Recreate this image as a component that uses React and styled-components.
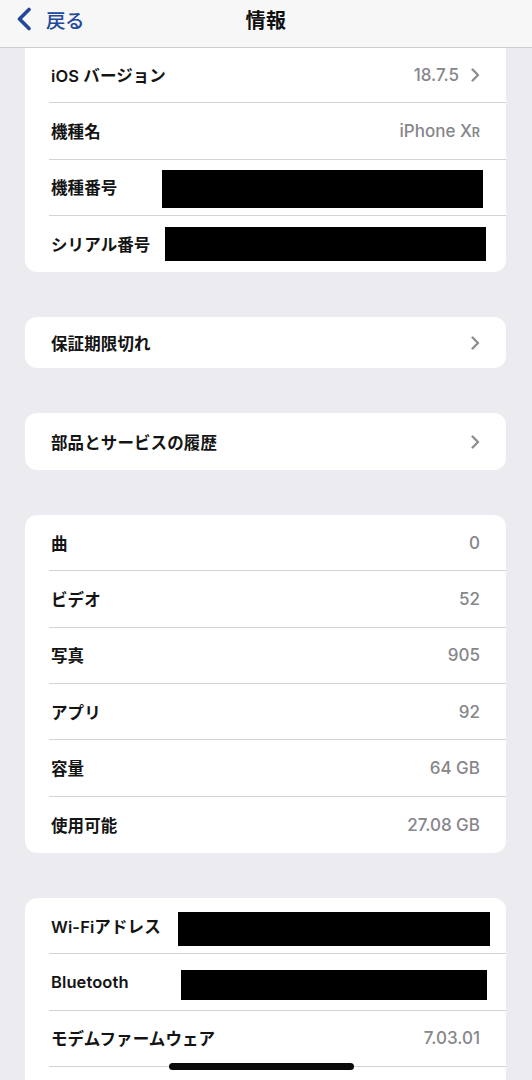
import React from "react";
import styled, { createGlobalStyle } from "styled-components";

const Global = createGlobalStyle`
  html, body { margin: 0; padding: 0; background: #ebebf0; }
  body { font-family: "Inter", "Noto Sans CJK JP", sans-serif; -webkit-font-smoothing: antialiased; }
  * { box-sizing: border-box; }
`;

const Screen = styled.div`
  position: relative;
  width: 532px;
  height: 1080px;
  overflow: hidden;
  background: #ebebf0;
  display: flex;
  flex-direction: column;
`;

const NavBar = styled.header`
  height: 48px;
  flex: none;
  background: #f7f7f7;
  border-bottom: 1px solid #cdcdd1;
  display: grid;
  grid-template-columns: 1fr auto 1fr;
  align-items: center;
  padding: 0 16px 9px 16px;
`;

const BackButton = styled.div`
  display: flex;
  align-items: center;
  gap: 14px;
  color: #23489b;
  font-size: 19.5px;
  font-weight: 500;
  font-family: "Noto Sans CJK JP", sans-serif;
  letter-spacing: -0.5px;
`;

const Title = styled.h1`
  margin: 0;
  font-size: 20px;
  font-weight: 700;
  color: #111;
  font-family: "Noto Sans CJK JP", sans-serif;
  letter-spacing: 0.5px;
`;

const Content = styled.main`
  display: flex;
  flex-direction: column;
  gap: 45px;
  padding: 0 26px 0 25px;
`;

const Card = styled.section`
  background: #fff;
  border-radius: ${(p) => (p.$clipped ? "0 0 12px 12px" : "12px")};
  overflow: hidden;
`;

const Row = styled.div`
  position: relative;
  height: ${(p) => p.$h || 56.33}px;
  padding-left: 24px;
`;

const RowInner = styled.div`
  height: 100%;
  display: flex;
  align-items: center;
  justify-content: space-between;
  padding: 0 26px 0 2px;
  border-bottom: ${(p) => (p.$last ? "none" : "1px solid #d3d3d6")};
`;

const Label = styled.span`
  font-size: 16.5px;
  font-weight: 600;
  color: #141414;
  letter-spacing: 0.1px;
`;

const ValueWrap = styled.span`
  display: flex;
  align-items: center;
  gap: 12px;
`;

const Value = styled.span`
  font-size: 17px;
  font-weight: 500;
  color: #86868b;
`;

const SmallCap = styled.span`
  font-size: 12.5px;
  font-weight: 600;
`;

const Redaction = styled.span`
  position: absolute;
  background: #000;
`;

const HomeIndicator = styled.div`
  position: absolute;
  left: 169px;
  bottom: 10px;
  width: 185px;
  height: 7px;
  border-radius: 4px;
  background: #0a0a0a;
`;

const Chevron = () => (
  <svg width="9" height="14" viewBox="0 0 9 14" fill="none">
    <path d="M1.6 1.5 L7 7 L1.6 12.5" stroke="#8e8e93" strokeWidth="2.4" strokeLinecap="round" strokeLinejoin="round" />
  </svg>
);

const BackChevron = () => (
  <svg width="16" height="24" viewBox="0 0 16 24" fill="none">
    <path d="M13 2.5 L3.5 12 L13 21.5" stroke="#23489b" strokeWidth="3.6" strokeLinecap="round" strokeLinejoin="round" />
  </svg>
);

const Item = ({ label, value, chevron, last, h, redact }) => (
  <Row $h={h}>
    <RowInner $last={last}>
      <Label>{label}</Label>
      <ValueWrap>
        {value !== undefined && <Value>{value}</Value>}
        {chevron && <Chevron />}
      </ValueWrap>
    </RowInner>
    {redact && (
      <Redaction
        style={{ left: redact[0], top: redact[1], width: redact[2], height: redact[3] }}
      />
    )}
  </Row>
);

export default function App() {
  return (
    <>
      <Global />
      <Screen>
        <NavBar>
          <BackButton>
            <BackChevron />
            <span>戻る</span>
          </BackButton>
          <Title>情報</Title>
          <span />
        </NavBar>
        <Content>
          <Card $clipped>
            <Item label="iOS バージョン" value="18.7.5" chevron h={55.33} />
            <Item
              label="機種名"
              value={
                <>
                  iPhone X<SmallCap>R</SmallCap>
                </>
              }
            />
            <Item label="機種番号" redact={[137, 10, 321, 38]} />
            <Item label="シリアル番号" last redact={[140, 11, 321, 34]} />
          </Card>
          <Card>
            <Item label="保証期限切れ" chevron last h={51} />
          </Card>
          <Card>
            <Item label="部品とサービスの履歴" chevron last h={56.7} />
          </Card>
          <Card>
            <Item label="曲" value="0" />
            <Item label="ビデオ" value="52" />
            <Item label="写真" value="905" />
            <Item label="アプリ" value="92" />
            <Item label="容量" value="64 GB" />
            <Item label="使用可能" value="27.08 GB" last />
          </Card>
          <Card>
            <Item label="Wi-Fiアドレス" redact={[153, 14, 312, 34]} />
            <Item label="Bluetooth" redact={[156, 16, 306, 30]} />
            <Item label="モデムファームウェア" value="7.03.01" />
            <Item label="" />
          </Card>
        </Content>
        <HomeIndicator />
      </Screen>
    </>
  );
}
